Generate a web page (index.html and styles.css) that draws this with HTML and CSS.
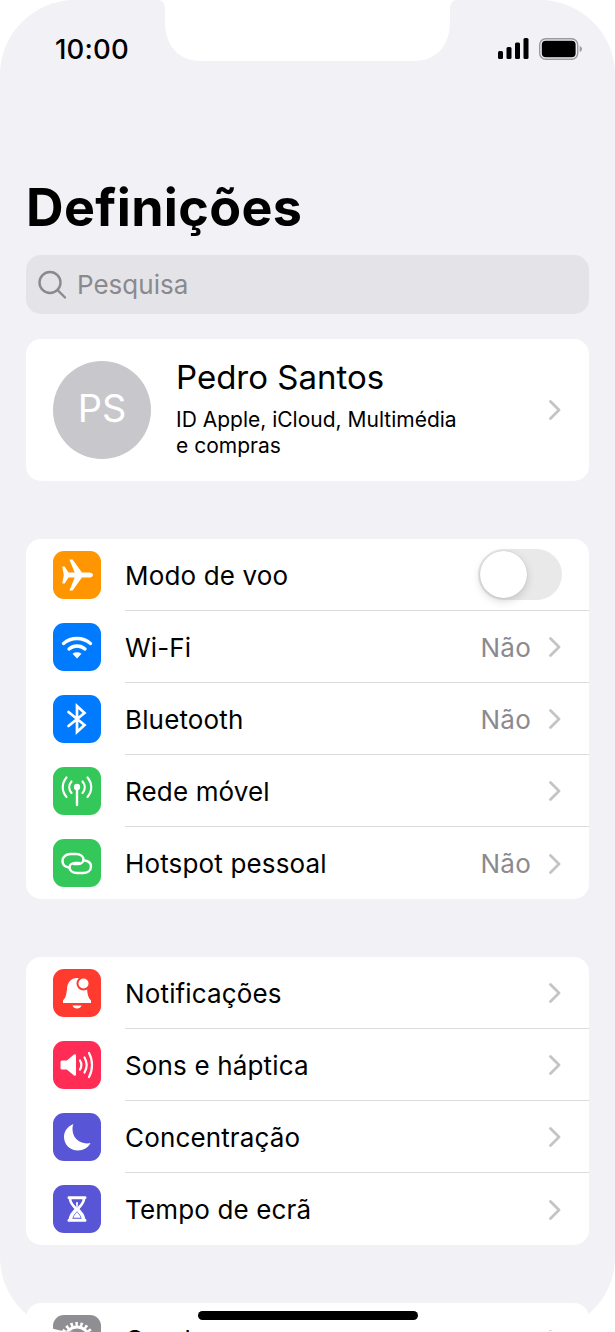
FILE: index.html
```html
<!DOCTYPE html>
<html lang="pt">
<head>
<meta charset="utf-8">
<title>Definições</title>
<link rel="stylesheet" href="styles.css">
</head>
<body>
<div class="screen">
  <svg class="notch" width="301" height="61" viewBox="0 0 301 61"><path d="M0 0C6 0 8 3 8 10V22C8 46 22 61 44 61H257C279 61 293 46 293 22V10C293 3 295 0 301 0Z" fill="#fff"/></svg>
  <div class="status">
    <span class="time">10:00</span>
    <span class="status-icons">
      <svg width="33" height="22" viewBox="0 0 33 22"><rect x="0" y="13" width="5" height="8" rx="1.5"/><rect x="8.500" y="9" width="5" height="12" rx="1.500"/><rect x="17" y="4.500" width="5" height="16.500" rx="1.500"/><rect x="25.500" y="0" width="5" height="21" rx="1.500"/></svg>
      <svg width="44" height="22" viewBox="0 0 44 22"><rect x="0.700" y="0.700" width="38" height="20.600" rx="6" fill="none" stroke="#9a9a9e" stroke-width="1.400"/><rect x="2.800" y="2.800" width="33.800" height="16.400" rx="4"/><path d="M40.700 8v6c1.400-.5 2.300-1.700 2.300-3s-.9-2.500-2.300-3z" fill="#9a9a9e"/></svg>
    </span>
  </div>
  <h1 class="title">Definições</h1>
  <div class="search">
    <svg width="30" height="30" viewBox="0 0 30 30" fill="none" stroke="#8a8a8e" stroke-width="2.400" stroke-linecap="round"><circle cx="13" cy="12.500" r="10.500"/><path d="M20.500 20l7.500 7.500"/></svg>
    <span>Pesquisa</span>
  </div>

  <section class="card profile">
    <div class="avatar">PS</div>
    <div class="profile-text">
      <div class="name">Pedro Santos</div>
      <div class="sub">ID Apple, iCloud, Multimédia<br>e compras</div>
    </div>
    <svg class="chev" width="14" height="20" viewBox="0 0 14 20"><path d="M2.500 1.500L11 10l-8.500 8.500"/></svg>
  </section>

  <section class="card group">
    <div class="row">
      <span class="icon orange"><svg width="36" height="36" viewBox="0 0 36 36" fill="#fff"><path d="M3.200 9.500h2.400l3.900 5.900h6.200L10.400 2.500h3.200l9.300 12.900h7.200c2.300 0 3.900 1.200 3.900 2.600s-1.600 2.600-3.900 2.600h-7.200l-9.300 12.900h-3.200l5.300-12.900H9.500l-3.900 5.900H3.200l1.600-8.500z"/></svg></span>
      <div class="row-main"><span class="label">Modo de voo</span><span class="toggle"><span class="knob"></span></span></div>
    </div>
    <div class="row">
      <span class="icon blue"><svg width="36" height="36" viewBox="0 0 36 36" fill="none" stroke="#fff" stroke-width="3.400" stroke-linecap="round"><path d="M4.500 14.500c7.800-6.700 19.200-6.700 27 0"/><path d="M10 20c4.700-4 11.300-4 16 0"/><path d="M18 29.500l-4.500-4.800c2.700-1.800 6.300-1.800 9 0z" fill="#fff" stroke="none"/></svg></span>
      <div class="row-main"><span class="label">Wi-Fi</span><span class="value">Não</span><svg class="chev" width="14" height="20" viewBox="0 0 14 20"><path d="M2.500 1.500L11 10l-8.500 8.500"/></svg></div>
    </div>
    <div class="row">
      <span class="icon blue"><svg width="36" height="36" viewBox="0 0 36 36" fill="none" stroke="#fff" stroke-width="2.700" stroke-linejoin="miter" stroke-linecap="round"><path d="M9.500 11L25.500 24l-7.500 7V5l7.500 7L9.500 25"/></svg></span>
      <div class="row-main"><span class="label">Bluetooth</span><span class="value">Não</span><svg class="chev" width="14" height="20" viewBox="0 0 14 20"><path d="M2.500 1.500L11 10l-8.500 8.500"/></svg></div>
    </div>
    <div class="row">
      <span class="icon green"><svg width="36" height="36" viewBox="0 0 36 36" fill="none" stroke="#fff" stroke-width="2.200" stroke-linecap="round"><circle cx="18" cy="14" r="3.200" fill="#fff" stroke="none"/><path d="M18 15v17" stroke-width="2.400"/><path d="M12.500 8.500c-3 3.500-3 8 0 11.500"/><path d="M23.500 8.500c3 3.500 3 8 0 11.500"/><path d="M7.500 4.500c-5 6-5 13.500 0 19.500"/><path d="M28.500 4.500c5 6 5 13.500 0 19.500"/></svg></span>
      <div class="row-main"><span class="label">Rede móvel</span><svg class="chev" width="14" height="20" viewBox="0 0 14 20"><path d="M2.500 1.500L11 10l-8.500 8.500"/></svg></div>
    </div>
    <div class="row">
      <span class="icon green"><svg width="36" height="36" viewBox="0 0 36 36" fill="none" stroke="#fff" stroke-width="2.400" stroke-linecap="round"><path d="M10 22.500C6 22 3.500 19.500 3.500 16 3.500 12 7 9 11.500 9H17c4.500 0 7.500 2.500 7.500 5.500 0 2.500-2.500 4.500-6 4.500H15"/><path d="M25.500 15.500c4 .5 6.500 3 6.500 6 0 4-3.500 6.500-8 6.500h-6c-4.500 0-7.500-2.500-7.500-5.500 0-2.500 2.500-4.500 6-4.500H20"/></svg></span>
      <div class="row-main"><span class="label">Hotspot pessoal</span><span class="value">Não</span><svg class="chev" width="14" height="20" viewBox="0 0 14 20"><path d="M2.500 1.500L11 10l-8.500 8.500"/></svg></div>
    </div>
  </section>

  <section class="card group">
    <div class="row">
      <span class="icon red"><svg width="36" height="36" viewBox="0 0 36 36" fill="#fff"><path d="M18 3c6 0 9.400 4.500 10 10.500.5 5.500 1 9 4 12v2.500H4v-2.500c3-3 3.500-6.500 4-12C8.600 7.500 12 3 18 3z"/><path d="M13.500 30.500h9c-.5 2-2.400 3-4.500 3s-4-1-4.500-3z"/><circle cx="24.500" cy="8.500" r="7" fill="#ff3b30"/><circle cx="24.500" cy="8.500" r="5"/></svg></span>
      <div class="row-main"><span class="label">Notificações</span><svg class="chev" width="14" height="20" viewBox="0 0 14 20"><path d="M2.500 1.500L11 10l-8.500 8.500"/></svg></div>
    </div>
    <div class="row">
      <span class="icon pink"><svg width="36" height="36" viewBox="0 0 36 36" fill="none" stroke="#fff" stroke-width="2.200" stroke-linecap="round"><path d="M3 13.500h4.800L15 7.500c.8-.6 2-.1 2 1v19c0 1.100-1.200 1.600-2 1l-7.200-6H3c-.8 0-1.500-.7-1.500-1.500v-6c0-.8.700-1.500 1.500-1.500z" fill="#fff" stroke="none"/><path d="M21 13.500c1.700 2.800 1.700 6.200 0 9"/><path d="M25.500 10.500c2.700 4.600 2.700 10.400 0 15"/><path d="M30 6c4 7 4 17 0 24"/></svg></span>
      <div class="row-main"><span class="label">Sons e háptica</span><svg class="chev" width="14" height="20" viewBox="0 0 14 20"><path d="M2.500 1.500L11 10l-8.500 8.500"/></svg></div>
    </div>
    <div class="row">
      <span class="icon indigo"><svg width="36" height="36" viewBox="0 0 36 36" fill="#fff"><path d="M14.500 5C9 7 5 12 5 18c0 7.700 6.300 13.500 14 13.500 5.500 0 10-2.800 12.500-7.500-1 .3-2.200.4-3.500.4-8.500 0-14.500-6-14.500-14.400 0-1.800.2-3.500 1-5z"/></svg></span>
      <div class="row-main"><span class="label">Concentração</span><svg class="chev" width="14" height="20" viewBox="0 0 14 20"><path d="M2.500 1.500L11 10l-8.500 8.500"/></svg></div>
    </div>
    <div class="row">
      <span class="icon indigo"><svg width="36" height="36" viewBox="-3 -3 42 42" fill="#fff"><path d="M8.500 3h19c1 0 1.500.6 1.500 1.400v.6c0 1-.5 1.600-1.500 1.700-.2 4.500-4 8.300-6.500 11.300 2.500 3 6.300 6.800 6.500 11.300 1 .1 1.500.7 1.500 1.700v.6c0 .8-.5 1.400-1.500 1.400h-19c-1 0-1.500-.6-1.500-1.400V31c0-1 .5-1.600 1.500-1.700.2-4.500 4-8.300 6.500-11.300-2.500-3-6.300-6.800-6.500-11.300C7.500 6.600 7 6 7 5v-.6C7 3.600 7.500 3 8.500 3z"/><path d="M11.500 6.700h13c-.3 3.800-4.300 7.300-6.500 10-2.200-2.700-6.200-6.200-6.500-10zM18 20.500c-1.500 2-4.500 4.500-5.500 8.800h11c-1-4.300-4-6.800-5.500-8.800z" fill="#5856d6"/><path d="M16.800 10h2.400l-.6 8h-1.200zM18 21.500c1.200 1.800 3.500 3.700 4.300 6.800H13.700c.8-3.100 3.100-5 4.300-6.800z"/></svg></span>
      <div class="row-main"><span class="label">Tempo de ecrã</span><svg class="chev" width="14" height="20" viewBox="0 0 14 20"><path d="M2.500 1.500L11 10l-8.500 8.500"/></svg></div>
    </div>
  </section>

  <section class="card group">
    <div class="row">
      <span class="icon gray"><svg width="36" height="36" viewBox="0 0 36 36" fill="none" stroke="#fff"><circle cx="18" cy="18" r="12" stroke-width="3"/><circle cx="18" cy="18" r="15" stroke-width="4" stroke-dasharray="2.500 2.400"/></svg></span>
      <div class="row-main"><span class="label">Geral</span><svg class="chev" width="14" height="20" viewBox="0 0 14 20"><path d="M2.500 1.500L11 10l-8.500 8.500"/></svg></div>
    </div>
  </section>
  <div class="home-bar"></div>
</div>
</body>
</html>
```
FILE: styles.css
```css
* { box-sizing: border-box; }
html, body { margin: 0; padding: 0; background: #fff; }
body { width: 615px; height: 1332px; overflow: hidden; font-family: Inter, "Liberation Sans", sans-serif; color: #000; }

.screen {
  position: relative;
  width: 615px;
  height: 1332px;
  overflow: hidden;
  background: #f1f1f6;
  border-radius: 75px;
  padding: 0 26px;
}
.notch {
  position: absolute;
  left: 157px;
  top: 0;
}
.status {
  height: 98px;
  display: flex;
  justify-content: space-between;
  align-items: flex-start;
  padding: 32px 6px 0 29px;
}
.time { font-size: 27.500px; line-height: 34px; font-weight: 500; letter-spacing: .2px; }
.status-icons { display: flex; gap: 8px; padding-top: 6px; }

.title {
  margin: 0;
  height: 157px;
  padding-top: 74px;
  font-size: 52px;
  line-height: 72px;
  font-weight: 700;
  letter-spacing: .35px;
}
.search {
  height: 59px;
  background: #e3e3e8;
  border-radius: 15px;
  display: flex;
  align-items: center;
  gap: 10px;
  padding-left: 11px;
  font-size: 26px;
  color: #8a8a8e;
}
.card { background: #fff; border-radius: 15px; overflow: hidden; }
.profile {
  margin-top: 25px;
  height: 142px;
  display: flex;
  align-items: center;
  padding: 0 27px;
}
.avatar {
  width: 98px;
  height: 98px;
  border-radius: 50%;
  background: #c7c7cc;
  color: #fff;
  font-size: 38px;
  padding-bottom: 3px;
  margin-bottom: 1px;
  display: flex;
  align-items: center;
  justify-content: center;
  flex: none;
}
.profile-text { margin-left: 25px; flex: 1; padding-bottom: 6px; }
.name { font-size: 33px; line-height: 42px; }
.sub { font-size: 21px; line-height: 26px; margin-top: 9px; }

.chev { fill: none; stroke: #c4c4c7; stroke-width: 2.800; stroke-linecap: round; stroke-linejoin: round; flex: none; }

.group { margin-top: 58px; }
.row { height: 72px; display: flex; align-items: center; padding-left: 26.500px; }
.icon {
  width: 48px;
  height: 48px;
  margin-bottom: 1px;
  border-radius: 11px;
  flex: none;
  display: flex;
  align-items: center;
  justify-content: center;
}
.icon svg { display: block; }
.orange { background: #ff9500; }
.blue { background: #007aff; }
.green { background: #34c759; }
.red { background: #ff3b30; }
.pink { background: #ff2d55; }
.indigo { background: #5856d6; }
.gray { background: #8e8e93; }

.row-main {
  flex: 1;
  height: 72px;
  margin-left: 24.500px;
  padding: 1px 27px 0 0;
  display: flex;
  align-items: center;
  border-bottom: 1px solid #dcdcdf;
}
.row:last-child .row-main { border-bottom: 0; }
.label { flex: 1; font-size: 26px; letter-spacing: .15px; }
.value { font-size: 26px; color: #8a8a8e; margin-right: 17px; letter-spacing: .25px; }
.toggle {
  width: 84px;
  height: 51px;
  border-radius: 26px;
  background: #e9e9ea;
  padding: 2px;
  display: block;
  margin-bottom: 1px;
}
.knob {
  display: block;
  width: 47px;
  height: 47px;
  border-radius: 50%;
  background: #fff;
  box-shadow: 0 3px 8px rgba(0,0,0,.16), 0 0 1px rgba(0,0,0,.2);
}
.home-bar {
  position: absolute;
  left: 198px;
  top: 1311px;
  width: 220px;
  height: 9px;
  border-radius: 5px;
  background: #000;
}
```
